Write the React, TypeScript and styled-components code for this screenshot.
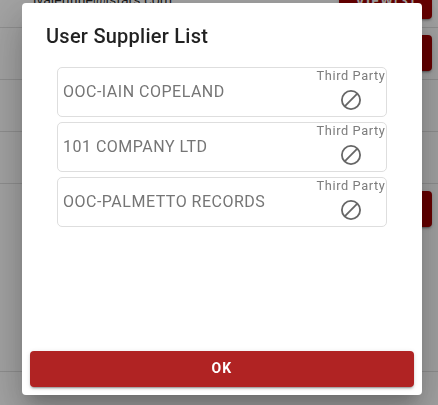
import React from 'react';
import styled, { createGlobalStyle } from 'styled-components';

const GlobalStyle = createGlobalStyle`
  * { box-sizing: border-box; }
  body { margin: 0; overflow: hidden; background: #fff; font-family: Roboto, sans-serif; }
`;

const Page = styled.div`
  height: 405px;
  overflow: hidden;
`;

const TableRow = styled.div<{ $height: number; $end?: boolean }>`
  display: flex;
  justify-content: space-between;
  align-items: ${p => (p.$end ? 'flex-end' : 'flex-start')};
  height: ${p => p.$height}px;
  padding: 7px 6px ${p => (p.$end ? 8 : 7)}px 33px;
  border-bottom: 1px solid rgba(0, 0, 0, 0.12);
`;

const Email = styled.span`
  font-size: 14px;
  line-height: 20px;
  letter-spacing: 0.05px;
  color: rgba(0, 0, 0, 0.87);
  margin-bottom: 9px;
`;

const ViewButton = styled.button`
  flex: none;
  width: 93px;
  height: 36px;
  margin-left: auto;
  padding: 0;
  border: 0;
  border-radius: 4px;
  background: #a00000;
  color: #fff;
  font: 700 14px/34px Roboto, sans-serif;
  letter-spacing: 1.25px;
  box-shadow: 0 3px 1px -2px rgba(0, 0, 0, 0.2), 0 2px 2px rgba(0, 0, 0, 0.14), 0 1px 5px rgba(0, 0, 0, 0.12);
`;

const Overlay = styled.div`
  position: fixed;
  inset: 0;
  padding: 3px 16px 10px 22px;
  background: rgba(0, 0, 0, 0.36);
`;

const Dialog = styled.section`
  display: flex;
  flex-direction: column;
  height: 392px;
  padding: 0 8px 8px;
  border-radius: 4px;
  background: #fff;
  box-shadow: 0 11px 15px -7px rgba(0, 0, 0, 0.2), 0 24px 38px 3px rgba(0, 0, 0, 0.14),
    0 9px 46px 8px rgba(0, 0, 0, 0.12);
`;

const Title = styled.h1`
  margin: 0;
  padding: 17px 16px 15px;
  font-size: 20px;
  line-height: 32px;
  font-weight: 500;
  letter-spacing: 0.25px;
  color: rgba(0, 0, 0, 0.87);
`;

const List = styled.div`
  display: flex;
  flex-direction: column;
  gap: 5px;
  flex: 1;
  padding: 0 27px;
`;

const Supplier = styled.div`
  display: flex;
  justify-content: space-between;
  height: 50px;
  padding-left: 5px;
  border: 1px solid #dedede;
  border-radius: 5px;
  color: #757575;
`;

const Name = styled.span`
  font-size: 16px;
  line-height: 48px;
  letter-spacing: 0.5px;
`;

const Party = styled.div`
  display: flex;
  flex-direction: column;
  align-items: center;
  width: 70px;
  font-size: 12.8px;
  color: #7c7c7c;
  line-height: 16px;
  letter-spacing: 0.6px;
  white-space: nowrap;
`;

const NoIcon = styled.svg`
  display: block;
  width: 24px;
  height: 24px;
  margin-top: 4px;
`;

const OkButton = styled.button`
  height: 36px;
  padding: 0 0 2px;
  border: 0;
  border-radius: 4px;
  background: #b02323;
  color: #fff;
  font: 700 14px/34px Roboto, sans-serif;
  letter-spacing: 1.25px;
  box-shadow: 0 3px 1px -2px rgba(0, 0, 0, 0.2), 0 2px 2px rgba(0, 0, 0, 0.14), 0 1px 5px rgba(0, 0, 0, 0.12);
`;

const suppliers = ['OOC-IAIN COPELAND', '101 COMPANY LTD', 'OOC-PALMETTO RECORDS'];

export default function App() {
  return (
    <>
      <GlobalStyle />
      <Page>
        <TableRow $height={28} $end>
          <Email>ivalentine@istars.com</Email>
          <ViewButton>VIEW(3)</ViewButton>
        </TableRow>
        <TableRow $height={52}>
          <ViewButton />
        </TableRow>
        <TableRow $height={52} />
        <TableRow $height={52} />
        <TableRow $height={188}>
          <ViewButton />
        </TableRow>
      </Page>
      <Overlay>
        <Dialog role="dialog">
          <Title>User Supplier List</Title>
          <List>
            {suppliers.map(name => (
              <Supplier key={name}>
                <Name>{name}</Name>
                <Party>
                  <span>Third Party</span>
                  <NoIcon viewBox="0 0 24 24" fill="none" stroke="#666" strokeWidth="1.8">
                    <circle cx="12" cy="12" r="9.1" />
                    <path d="M5.7 18.3 18.3 5.7" />
                  </NoIcon>
                </Party>
              </Supplier>
            ))}
          </List>
          <OkButton>OK</OkButton>
        </Dialog>
      </Overlay>
    </>
  );
}
